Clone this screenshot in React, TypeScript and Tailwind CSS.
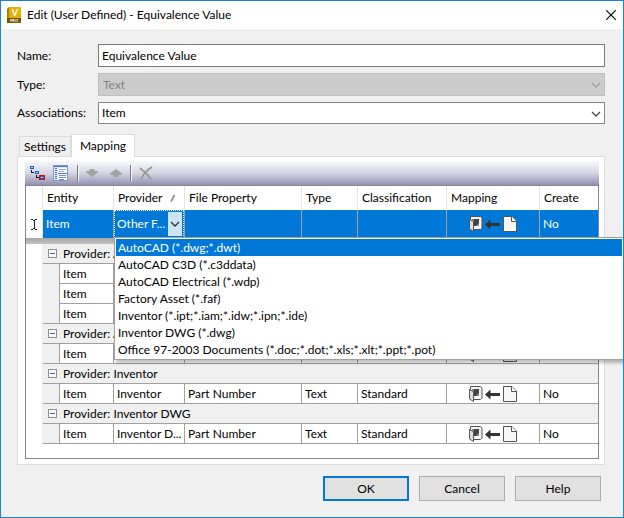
import { useState } from 'react';
import clsx from 'clsx';

const providers = [
  'AutoCAD (*.dwg;*.dwt)',
  'AutoCAD C3D (*.c3ddata)',
  'AutoCAD Electrical (*.wdp)',
  'Factory Asset (*.faf)',
  'Inventor (*.ipt;*.iam;*.idw;*.ipn;*.ide)',
  'Inventor DWG (*.dwg)',
  'Office 97-2003 Documents (*.doc;*.dot;*.xls;*.xlt;*.ppt;*.pot)',
];

type Row = { provider: string; property: string };
type Group = { name: string; rows: Row[] };

const groups: Group[] = [
  {
    name: 'AutoCAD',
    rows: [
      { provider: 'AutoCAD', property: 'Part Number' },
      { provider: 'AutoCAD', property: 'Part Number' },
      { provider: 'AutoCAD', property: 'Part Number' },
    ],
  },
  { name: 'AutoCAD C3D', rows: [{ provider: 'AutoCAD', property: 'Part Number' }] },
  { name: 'Inventor', rows: [{ provider: 'Inventor', property: 'Part Number' }] },
  { name: 'Inventor DWG', rows: [{ provider: 'Inventor D...', property: 'Part Number' }] },
];

function AppIcon() {
  return (
    <svg width="14" height="16" viewBox="0 0 14 16" aria-hidden="true">
      <path d="M0 2 2 0v14l-2 2z" fill="#a87f00" />
      <path d="M2 0h11a1 1 0 0 1 1 1v10H2z" fill="#e3b004" />
      <path d="M0 11h14v4a1 1 0 0 1-1 1H0z" fill="#6f5500" />
      <text x="8" y="9" textAnchor="middle" fontSize="9" fontWeight="700" fill="#fff">V</text>
      <text x="7" y="15" textAnchor="middle" fontSize="4" fontWeight="700" fill="#fff">PRO</text>
    </svg>
  );
}

function Chevron({ className }: { className?: string }) {
  return (
    <svg width="10" height="6" viewBox="0 0 10 6" className={className} aria-hidden="true">
      <path d="M1 1l4 4 4-4" fill="none" stroke="currentColor" strokeWidth="1.3" />
    </svg>
  );
}

function TreeIcon() {
  return (
    <svg width="16" height="16" viewBox="0 0 16 16" shapeRendering="crispEdges" aria-hidden="true">
      <path d="M2 5h1v2h2v1H2zM7 10h1v2h2v1H7z" fill="#111" />
      <rect x="1" y="1" width="4" height="3" fill="#1f5fbf" />
      <rect x="2" y="2" width="2" height="1" fill="#bcd6f5" />
      <rect x="6" y="6" width="4" height="3" fill="#1f5fbf" />
      <rect x="7" y="7" width="2" height="1" fill="#bcd6f5" />
      <rect x="10" y="10" width="6" height="5" fill="#f00000" />
      <rect x="11" y="11" width="4" height="3" fill="#1f5fbf" />
      <rect x="12" y="12" width="2" height="1" fill="#bcd6f5" />
    </svg>
  );
}

function FormIcon() {
  return (
    <svg width="16" height="16" viewBox="0 0 16 16" shapeRendering="crispEdges" aria-hidden="true">
      <rect x=".5" y=".5" width="14" height="15" fill="#dde8f7" stroke="#7d9cc9" />
      <path d="M1 1.500h13" stroke="#4d74b3" />
      <path d="M2 3.500h2M2 5.500h2M2 7.500h2M2 9.500h2M2 11.500h2M2 13.500h2" stroke="#5578b0" />
      <rect x="5" y="3" width="9" height="5" fill="#fff" />
      <rect x="5" y="9" width="9" height="6" fill="#fff" />
      <path d="M6 4.500h7M6 6.500h5" stroke="#8fb0de" />
      <path d="M5 8.500h9" stroke="#4d74b3" />
      <path d="M6 10.500h7M6 12.500h7M6 14.500h5" stroke="#6d93cc" />
    </svg>
  );
}

function ArrowIcon({ up }: { up?: boolean }) {
  return (
    <svg width="12" height="8" viewBox="0 0 12 8" className={up ? 'rotate-180' : ''} aria-hidden="true">
      <path d="M3.500 0h5v2H12v1.500L6 8 0 3.500V2h3.500z" fill="#a3a3a3" />
    </svg>
  );
}

function DeleteIcon() {
  return (
    <svg width="14" height="14" viewBox="0 0 14 14" aria-hidden="true">
      <path d="M1 2C5 5 9 9 12 13M13 1C8 4 4 9 2 13" fill="none" stroke="#9a9a9a" strokeWidth="2" />
    </svg>
  );
}

function MappingIcon() {
  return (
    <svg width="50" height="16" viewBox="0 0 50 16" className="mx-auto block" role="img" aria-label="File to item">
      <path d="M2.500.5h10l1.500 1.500v10l-1.500 1.500h-7l-3-1z" fill="#f4f4f4" stroke="#555" />
      <rect x="4" y="3" width="7" height="7" fill="#8a8a8a" />
      <path d="M6 3h5v4L8 10H6z" fill="#444" />
      <path d="M1.500 3.500 5.500 5.500v10l-4-2.500z" fill="#dcdcdc" stroke="#555" />
      <path d="M17 8.500 22.500 3.500V7H32v3h-9.500v3.500z" fill="#333" />
      <path d="M35.500.5h8.500l4.500 4.500v10.500h-13z" fill="#f7f7f7" stroke="#555" />
      <path d="M43.500.5V5.500h5" fill="#fff" stroke="#555" />
    </svg>
  );
}

function ToggleBox({ open, onClick, label }: { open: boolean; onClick: () => void; label: string }) {
  return (
    <button
      onClick={onClick}
      aria-expanded={open}
      aria-label={label}
      className="flex h-[9px] w-[9px] shrink-0 items-center justify-center border border-[#919191] bg-[#fafafa]"
    >
      <svg width="5" height="5" viewBox="0 0 5 5" shapeRendering="crispEdges" aria-hidden="true">
        <path d={open ? 'M0 2.500h5' : 'M0 2.500h5M2.500 0v5'} stroke="#3c5fb4" />
      </svg>
    </button>
  );
}

function ProviderCell() {
  const [value, setValue] = useState('Other F...');
  const [open, setOpen] = useState(true);
  const [active, setActive] = useState(0);

  return (
    <td className="relative border-r border-[#a0a0a0] bg-[#0078d7] p-0 text-white">
      <div className="flex h-7 items-center border border-dotted border-white pl-[2px]">
        <span className="min-w-0 flex-1 truncate">{value}</span>
        <button
          aria-label="Choose provider"
          aria-haspopup="listbox"
          aria-expanded={open}
          onClick={() => setOpen(!open)}
          className="flex h-full w-4 shrink-0 items-center justify-center border border-[#0078d7] bg-[#cce4f7] text-[#333]"
        >
          <Chevron />
        </button>
      </div>
      {open && (
        <ul
          role="listbox"
          aria-label="Provider"
          className="absolute top-[27px] left-0 z-10 w-[510px] border border-[#a0a0a0] bg-white p-px text-black shadow-[2px_3px_3px_rgba(0,0,0,0.25)]"
        >
          {providers.map((p, i) => (
            <li
              key={p}
              role="option"
              aria-selected={i === active}
              onMouseEnter={() => setActive(i)}
              onClick={() => {
                setValue(p);
                setOpen(false);
              }}
              className={clsx('h-[17px] px-[2px] leading-[17px] whitespace-nowrap', i === active && 'bg-[#0078d7] text-white')}
            >
              {p}
            </li>
          ))}
        </ul>
      )}
    </td>
  );
}

function GroupRows({ group }: { group: Group }) {
  const [open, setOpen] = useState(true);
  const cell = 'truncate border-r border-b border-[#a0a0a0] bg-white pr-0 pl-[3px]';

  return (
    <>
      <tr className="h-5">
        <td className="border-r border-[#f0f0f0] bg-white" />
        <td colSpan={8} className="border-b border-[#a0a0a0] bg-[#f0f0f0] p-0">
          <div className="flex items-center gap-[6px] pl-[5px]">
            <ToggleBox open={open} onClick={() => setOpen(!open)} label={`Toggle ${group.name}`} />
            <span>Provider: {group.name}</span>
          </div>
        </td>
      </tr>
      {open &&
        group.rows.map((row, i) => (
          <tr key={i} className="h-5">
            <td className="border-r border-[#f0f0f0] bg-white" />
            <td className={clsx('border-r border-r-[#a0a0a0] border-b-[#a0a0a0] bg-[#f0f0f0]', i === group.rows.length - 1 && 'border-b')} />
            <td className={cell}>Item</td>
            <td className={cell}>{row.provider}</td>
            <td className={cell}>{row.property}</td>
            <td className={cell}>Text</td>
            <td className={cell}>Standard</td>
            <td className="border-r border-b border-[#a0a0a0] bg-white p-0"><MappingIcon /></td>
            <td className="truncate border-b border-[#a0a0a0] bg-white px-[3px]">No</td>
          </tr>
        ))}
    </>
  );
}

function MappingTable() {
  const head = 'border-r border-[#e5e5e5] px-1 text-left font-normal';
  const selected = 'border-r border-[#a0a0a0] bg-[#0078d7] px-[3px] text-white';

  return (
    <div className="border border-[#828790] bg-white pb-[14px]">
      <table className="w-full table-fixed border-separate border-spacing-0">
        <colgroup>
          <col className="w-[17px]" />
          <col className="w-[17px]" />
          <col className="w-[54px]" />
          <col className="w-[71px]" />
          <col className="w-[117px]" />
          <col className="w-[56px]" />
          <col className="w-[89px]" />
          <col className="w-[93px]" />
          <col />
        </colgroup>
        <thead>
          <tr className="h-6">
            <th className={head} />
            <th className={head} colSpan={2}>Entity</th>
            <th className={head}>
              <div className="flex items-center justify-between pr-1">
                Provider
                <svg width="6" height="8" viewBox="0 0 6 8" aria-hidden="true">
                  <path d="M1 7.500 4.500 1" stroke="#888" strokeWidth="1.6" fill="none" />
                </svg>
              </div>
            </th>
            <th className={head}>File Property</th>
            <th className={head}>Type</th>
            <th className={head}>Classification</th>
            <th className={head}>Mapping</th>
            <th className="px-1 text-left font-normal">Create</th>
          </tr>
        </thead>
        <tbody>
          <tr className="h-7">
            <td className="border-r border-[#e5e5e5] p-0">
              <svg width="6" height="11" viewBox="0 0 6 11" className="mx-auto block" shapeRendering="crispEdges" aria-hidden="true">
                <path d="M0 .5h2M4 .5h2M2 1.500h2M3 1v9M2 9.500h2M0 10.500h2M4 10.500h2" stroke="#222" fill="none" />
              </svg>
            </td>
            <td className={selected} colSpan={2}>Item</td>
            <ProviderCell />
            <td className={selected} />
            <td className={selected} />
            <td className={selected} />
            <td className="border-r border-[#a0a0a0] bg-[#0078d7] p-0"><MappingIcon /></td>
            <td className="bg-[#0078d7] px-[3px] text-white">No</td>
          </tr>
          <tr>
            <td colSpan={9} className="h-[6px] bg-linear-to-b from-[#a8a8a8] to-[#c0c0c0] p-0" />
          </tr>
          {groups.map(g => (
            <GroupRows key={g.name} group={g} />
          ))}
        </tbody>
      </table>
    </div>
  );
}

function Divider() {
  return <span className="h-4 w-px bg-[#6f6f9b] shadow-[1px_0_0_#fff]" />;
}

function Toolbar() {
  return (
    <div className="flex h-6 items-center bg-linear-to-b from-[#f8f8fc] via-[#d6d6e4] to-[#9490b2] px-1">
      <button aria-label="Map to item" className="mr-2"><TreeIcon /></button>
      <button aria-label="Properties" className="mr-2"><FormIcon /></button>
      <Divider />
      <button aria-label="Move down" disabled className="mr-3 ml-2"><ArrowIcon /></button>
      <button aria-label="Move up" disabled className="mr-2"><ArrowIcon up /></button>
      <Divider />
      <button aria-label="Delete" disabled className="ml-2"><DeleteIcon /></button>
    </div>
  );
}

export default function App() {
  const [tab, setTab] = useState('Mapping');
  const [name, setName] = useState('Equivalence Value');
  const button = 'h-[25px] w-[86px] bg-[#e1e1e1]';

  return (
    <div className="flex min-h-screen flex-col overflow-hidden border border-[#1883d7] bg-[#f0f0f0] font-['Lato','Open_Sans',sans-serif] text-[12px] leading-4 text-black">
      <header className="flex h-7 items-center bg-white pr-[7px] pl-[6px]">
        <AppIcon />
        <h1 className="ml-[6px] flex-1">Edit (User Defined) - Equivalence Value</h1>
        <button aria-label="Close">
          <svg width="10" height="10" viewBox="0 0 10 10" aria-hidden="true">
            <path d="M0 0l10 10M10 0L0 10" stroke="#000" strokeWidth="1.1" />
          </svg>
        </button>
      </header>

      <main className="pt-[15px] pr-[18px] pl-4">
        <div className="grid grid-cols-[81px_1fr] items-center gap-y-[6px]">
          <label htmlFor="name">Name:</label>
          <input
            id="name"
            value={name}
            onChange={e => setName(e.target.value)}
            className="h-[23px] w-full border border-[#7a7a7a] bg-white px-[3px] outline-none"
          />
          <label htmlFor="type">Type:</label>
          <div className="relative">
            <select id="type" disabled className="block h-[23px] w-full appearance-none border border-[#bfbfbf] bg-[#cccccc] px-1 text-[#838383] opacity-100">
              <option>Text</option>
            </select>
            <Chevron className="pointer-events-none absolute top-[9px] right-1 text-[#a0a0a0]" />
          </div>
          <label htmlFor="associations">Associations:</label>
          <div className="relative">
            <select id="associations" className="block h-[22px] w-full appearance-none border border-[#828790] bg-white px-[3px] outline-none">
              <option>Item</option>
            </select>
            <Chevron className="pointer-events-none absolute top-[9px] right-1 text-[#444]" />
          </div>
        </div>

        <div role="tablist" className="mt-[10px] flex items-end pl-[2px]">
          {['Settings', 'Mapping'].map(t => (
            <button
              key={t}
              role="tab"
              aria-selected={tab === t}
              onClick={() => setTab(t)}
              className={clsx(
                'border border-b-0 border-[#dcdcdc]',
                tab === t ? 'relative -mb-px h-[23px] w-16 bg-white' : 'h-5 w-[52px]',
              )}
            >
              {t}
            </button>
          ))}
        </div>
        <div role="tabpanel" className="border border-[#dcdcdc] bg-white pt-1 pr-[5px] pb-[5px] pl-[7px]">
          <Toolbar />
          <MappingTable />
        </div>
      </main>

      <footer className="flex justify-end gap-[10px] px-[22px] pt-[11px] pb-4">
        <button className={clsx(button, 'border-2 border-[#0078d7]')}>OK</button>
        <button className={clsx(button, 'border border-[#adadad]')}>Cancel</button>
        <button className={clsx(button, 'border border-[#adadad]')}>Help</button>
      </footer>
    </div>
  );
}
